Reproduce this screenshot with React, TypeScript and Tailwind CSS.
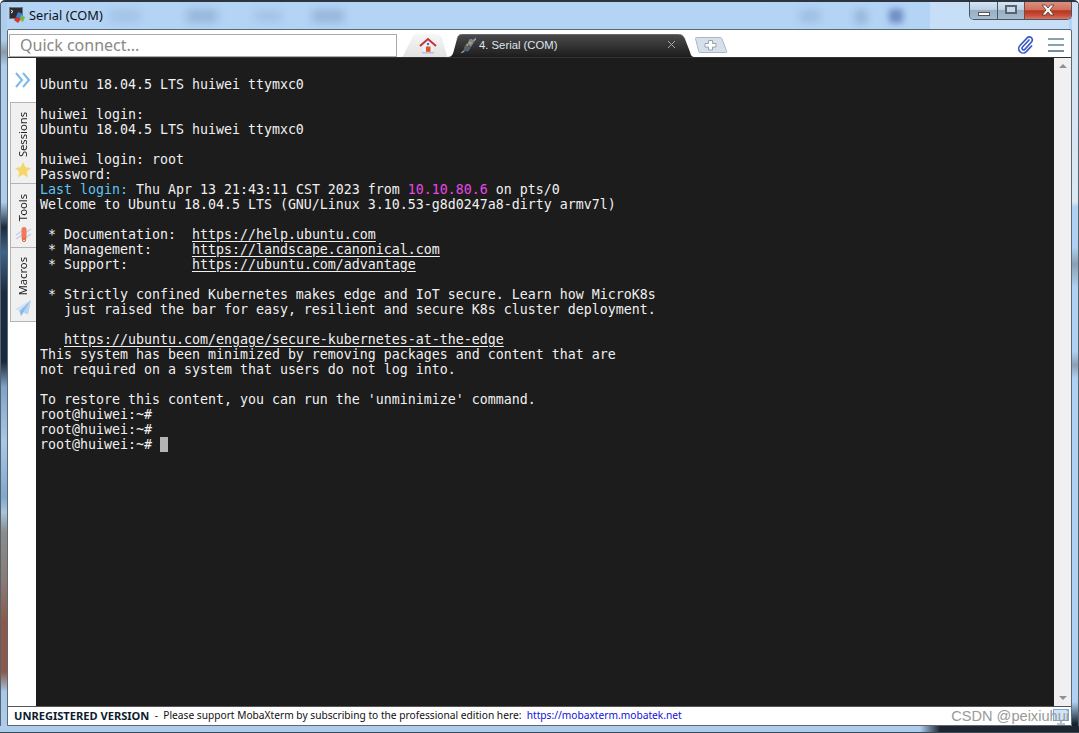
import { ReactNode } from 'react';

const mono = "font-['DejaVu_Sans_Mono','Liberation_Mono',monospace]";

function Link({ children }: { children: ReactNode }) {
  return <span className="underline underline-offset-2">{children}</span>;
}

function AppIcon() {
  return (
    <svg width="17" height="17" viewBox="0 0 17 17">
      <rect x="0.5" y="0.5" width="13" height="11" fill="#2c2c34" stroke="#777" />
      <path d="M2 3l2 1.5L2 6" stroke="#fff" fill="none" />
      <path d="M9 5l5 2-2 5-5-2z" fill="#3f7fd0" />
      <path d="M7 10l5 2-3 4-4-3z" fill="#d8332c" />
      <path d="M12 8l4 2-2 5-3-2z" fill="#7cb83a" />
    </svg>
  );
}

function HomeIcon() {
  return (
    <svg width="18" height="17" viewBox="0 0 18 17">
      <path d="M4 8l5-5 5 5v7H4z" fill="#eef0f6" />
      <path d="M1 9l8-7 8 7" fill="none" stroke="#c8323a" strokeWidth="2" />
      <circle cx="9" cy="7" r="1.2" fill="#3a78c0" />
      <rect x="7" y="9.5" width="4.5" height="6" fill="#e8501c" />
      <rect x="3" y="14.8" width="12" height="1.8" fill="#b9bde8" />
    </svg>
  );
}

function PlugIcon() {
  return (
    <svg width="17" height="17" viewBox="0 0 17 17">
      <path d="M9.500 2.500c2-1.500 5 .8 4 3.500L11 10 7 7z" fill="#7c8993" />
      <path d="M6 7l5 3.500-2.500 3.500c-2 1.500-5.500-1-4.500-3.500z" fill="#56636e" />
      <path d="M13 3l3-2.500v2L14 5zM4 13l-3.500 3h2L5 14z" fill="#8fa0ac" />
      <path d="M6.500 7.500l1.500 1M9.500 5.500L11 6.500" stroke="#f0c020" strokeWidth="1.500" />
    </svg>
  );
}

function ClipIcon() {
  return (
    <svg width="18" height="18" viewBox="0 0 18 18">
      <path
        d="M12.5 3.5L5.5 11a1.6 1.6 0 0 0 2.3 2.3L14.5 6a3 3 0 0 0-4.3-4.2L3 9.5a4.4 4.4 0 0 0 6.3 6.2L15 9.5"
        fill="none"
        stroke="#4058c8"
        strokeWidth="1.7"
      />
    </svg>
  );
}

function StarIcon() {
  return (
    <svg width="16" height="16" viewBox="0 0 16 16">
      <path d="M8 0l2.400 5.300 5.600.6-4.200 3.800 1.200 5.700L8 12.600l-5 2.800 1.200-5.700L0 5.900l5.600-.6z" fill="#f3d76a" />
    </svg>
  );
}

function ToolsIcon() {
  return (
    <svg width="17" height="16" viewBox="0 0 17 16">
      <path d="M1 13L16 3M1 9l9-6M7 14l9-6" stroke="#c9cde6" strokeWidth="1.5" />
      <rect x="6.5" y="1" width="5" height="13" rx="2.5" fill="#f0785c" />
      <circle cx="9" cy="14" r="1.6" fill="none" stroke="#d8603c" />
    </svg>
  );
}

function PlaneIcon() {
  return (
    <svg width="16" height="16" viewBox="0 0 16 16">
      <path d="M16 0L0 9l4.500 2z" fill="#cfe2f6" />
      <path d="M16 0L4.500 11 6 16l2.500-3.400z" fill="#8dbbe8" />
      <path d="M16 0L8.500 12.600l4.500 2z" fill="#b4d3f1" />
    </svg>
  );
}

function SideTab({ label, icon, height }: { label: string; icon: ReactNode; height: string }) {
  return (
    <div className={`flex flex-col items-center justify-end gap-[5px] pb-[5px] pr-[1px] border-b border-[#b4b4b4] ${height}`}>
      <span className="[writing-mode:vertical-rl] rotate-180 font-['Noto_Sans',sans-serif] text-[11.2px] leading-none text-[#222]">
        {label}
      </span>
      {icon}
    </div>
  );
}

export default function App() {
  return (
    <div className="relative w-[1079px] h-[733px] overflow-hidden flex flex-col bg-gradient-to-b from-[#b4d4f5] to-[#a9cdf0] border-t-2 border-[#2c3440] rounded-t-[5px]">
      {/* blurred desktop showing through the glass */}
      <div className="absolute left-0 top-0 w-[7px] h-[731px] border-l border-[#56646f] bg-[linear-gradient(to_bottom,#aecdec_0px,#aecdec_38px,#8a9aa8_50px,#aecdec_64px,#aecdec_200px,#1c2c40_225px,#3f648c_250px,#1c2c40_290px,#1a2a3e_360px,#7fa3c6_385px,#a8c8e8_440px,#7fa8cc_495px,#a8c4dc_510px,#8c8c8c_530px,#8a7a74_580px,#8c5a48_620px,#8c5a48_670px,#a8c8e8_690px,#aecdec_731px)]" />
      <div className="absolute right-0 top-0 w-[7px] h-[731px] border-r border-[#56646f] bg-[linear-gradient(to_bottom,#cfe2f4_0px,#dbe8f4_200px,#aed0f2_205px,#aed0f2_245px,#8aa0b4_262px,#aed0f2_285px,#aed0f2_350px,#8aa0b4_363px,#aed0f2_376px,#aed0f2_700px,#14202c_722px)]" />
      <div className="absolute left-0 bottom-0 w-[1079px] h-[7px] border-b border-[#3c4852] bg-[linear-gradient(to_right,#aecdec_0px,#aecdec_920px,#1d2630_940px,#1d2630_1079px)]" />
      <div className="absolute left-[110px] top-[8px] w-[30px] h-[12px] bg-[#8fb2d6] blur-[5px] opacity-50" />
      <div className="absolute left-[187px] top-[8px] w-[30px] h-[12px] bg-[#84a6ca] blur-[5px] opacity-70" />
      <div className="absolute left-[255px] top-[8px] w-[26px] h-[12px] bg-[#8fb2d6] blur-[5px] opacity-50" />
      <div className="absolute left-[312px] top-[8px] w-[32px] h-[12px] bg-[#84a6ca] blur-[5px] opacity-70" />
      <div className="absolute left-[800px] top-[8px] w-[20px] h-[12px] bg-[#8fb2d6] blur-[5px] opacity-70" />
      <div className="absolute left-[855px] top-[8px] w-[12px] h-[14px] bg-[#84a6ca] blur-[4px] opacity-70" />
      <div className="absolute left-[889px] top-[7px] w-[14px] h-[14px] bg-[#5c7cb8] blur-[3px] opacity-80" />
      <div className="absolute left-[930px] top-0 w-[139px] h-[27px] bg-[#d2e4f6] opacity-60" />

      {/* title bar */}
      <div className="relative h-[27px] shrink-0 flex items-start">
        <div className="mt-[5px] ml-[9px]">
          <AppIcon />
        </div>
        <span className="ml-[3px] mt-[4px] font-['Noto_Sans',sans-serif] text-[12.8px] leading-[18px] text-[#111]">Serial (COM)</span>
        <div className="ml-auto mr-[7px] flex h-[18px] border border-t-0 border-[#4a5664] rounded-b-[5px] overflow-hidden">
          <div className="w-[28px] flex items-center justify-center border-r border-[#4a5664] bg-[linear-gradient(to_bottom,#d4e4f3_0%,#bcd0e4_45%,#98aec4_50%,#a8bccf_100%)]">
            <div className="mt-[7px] w-[12px] h-[4px] bg-white border border-[#555]" />
          </div>
          <div className="w-[26px] flex items-center justify-center bg-[linear-gradient(to_bottom,#d4e4f3_0%,#bcd0e4_45%,#98aec4_50%,#a8bccf_100%)]">
            <div className="mb-[2px] w-[12px] h-[9px] border-2 border-[#59636e] bg-[#c8d8e8]" />
          </div>
          <div className="w-[47px] flex items-center justify-center border-l border-[#7a4a40] bg-[linear-gradient(to_bottom,#dc8f80_0%,#d0705c_45%,#b83420_52%,#c8503c_80%,#d87868_100%)]">
            <svg width="16" height="12" viewBox="0 0 16 12" className="mb-[1px]">
              <path d="M2 1h3.500L8 4l2.500-3H14l-4 5 4 5h-3.500L8 8l-2.500 3H2l4-5z" fill="#f4f4f4" stroke="#5a3a34" strokeWidth="0.8" />
            </svg>
          </div>
        </div>
      </div>

      {/* white frame */}
      <div className="relative flex-1 min-h-0 mx-[7px] mb-[7px] flex flex-col bg-white border border-[#5c6874] rounded-t-[2px]">
        {/* toolbar */}
        <div className="h-[27px] shrink-0 flex items-end pl-[1px]">
          <div className="w-[388px] h-[23px] border border-[#aaa] flex items-center pl-[10px] pb-[2px] font-['Noto_Sans',sans-serif] text-[16px] text-[#888]">
            Quick connect...
          </div>
          <div className="relative ml-[1px] w-[50px] h-[23px] flex items-center justify-center pl-[10px]">
            <svg width="50" height="23" viewBox="0 0 50 23" className="absolute left-0 top-0">
              <defs>
                <linearGradient id="homeTab" x1="0" y1="0" x2="0" y2="1">
                  <stop offset="0" stopColor="#f6f6f6" />
                  <stop offset="1" stopColor="#e2e2e2" />
                </linearGradient>
              </defs>
              <path d="M0 23c5 0 6-2 7-5l7-14c1-3 3-4 6-4h18c3 0 4 1 6 4l4 14c1 3 1 5 2 5z" fill="url(#homeTab)" />
            </svg>
            <div className="relative">
              <HomeIcon />
            </div>
          </div>
          <div className="relative w-[247px] h-[23px] flex items-center pl-[12px]">
            <svg width="247" height="23" viewBox="0 0 247 23" className="absolute left-0 top-0">
              <defs>
                <linearGradient id="darkTab" x1="0" y1="0" x2="0" y2="1">
                  <stop offset="0" stopColor="#4c4c4c" />
                  <stop offset="1" stopColor="#1c1c1c" />
                </linearGradient>
              </defs>
              <path d="M0 23c4 0 5-3 6-7l3-11c1-4 3-5 7-5h212c5 0 7 1 9 5l5 13c1 4 2 5 5 5z" fill="url(#darkTab)" />
              <path d="M9 5c1-4 3-5 7-5h212c5 0 7 1 9 5" fill="none" stroke="#7a8a98" strokeWidth="1" />
              <path d="M220 7l7 7M227 7l-7 7" stroke="#a8a8a8" strokeWidth="1" />
            </svg>
            <div className="relative flex items-center">
              <PlugIcon />
              <span className="ml-[2px] font-['Liberation_Sans',sans-serif] text-[11.3px] text-[#dfe6ee]">4. Serial (COM)</span>
            </div>
          </div>
          <svg width="34" height="16" viewBox="0 0 34 16" className="-ml-[1px] mb-[4px]">
            <path d="M1.500 1.500c0-.6.4-1 1-1h24c.6 0 1 .2 1.300 1l5 13c.2.600 0 1-.8 1H6c-.6 0-1-.2-1.200-.8z" fill="#d6e0ea" stroke="#a8b8c8" />
            <path d="M14.500 3.500h4v3h3.500v3.500h-3.500v3h-4v-3H11V6.500h3.500z" fill="#fff" stroke="#9aa4ae" />
          </svg>
          <div className="ml-auto mb-[3px] mr-[7px] flex items-center gap-[13px]">
            <ClipIcon />
            <div className="w-[16px] h-[14px] flex flex-col justify-between">
              <div className="h-[2px] bg-[#86a2ae]" />
              <div className="h-[2px] bg-[#86a2ae]" />
              <div className="h-[2px] bg-[#6f8f9c]" />
            </div>
          </div>
        </div>

        {/* main row */}
        <div className="flex-1 min-h-0 flex border-t border-[#333]">
          {/* sidebar */}
          <div className="w-[28px] shrink-0 flex flex-col pl-[2px]">
            <div className="h-[44px] flex items-center justify-center">
              <svg width="16" height="16" viewBox="0 0 16 16">
                <path d="M1 1l6 7-6 7M8 1l6 7-6 7" fill="none" stroke="#7db8ec" strokeWidth="2" />
              </svg>
            </div>
            <div className="bg-[#f0f0f0] border-l border-t border-[#b4b4b4]">
              <SideTab label="Sessions" height="h-[81px]" icon={<StarIcon />} />
              <SideTab label="Tools" height="h-[64px]" icon={<ToolsIcon />} />
              <SideTab label="Macros" height="h-[74px]" icon={<PlaneIcon />} />
            </div>
          </div>

          {/* terminal */}
          <div className={`flex-1 min-w-0 bg-[#1c1c1c] pt-[4px] pl-[4px] text-[13.29px] leading-[15px] whitespace-pre text-[#f0f0f0] ${mono}`}>
            <div>{' '}</div>
            <div>Ubuntu 18.04.5 LTS huiwei ttymxc0</div>
            <div>{' '}</div>
            <div>huiwei login:</div>
            <div>Ubuntu 18.04.5 LTS huiwei ttymxc0</div>
            <div>{' '}</div>
            <div>huiwei login: root</div>
            <div>Password:</div>
            <div>
              <span className="text-[#5fc4f0]">Last login:</span> Thu Apr 13 21:43:11 CST 2023 from{' '}
              <span className="text-[#e848e8]">10.10.80.6</span> on pts/0
            </div>
            <div>Welcome to Ubuntu 18.04.5 LTS (GNU/Linux 3.10.53-g8d0247a8-dirty armv7l)</div>
            <div>{' '}</div>
            <div> * Documentation:  <Link>https://help.ubuntu.com</Link></div>
            <div> * Management:     <Link>https://landscape.canonical.com</Link></div>
            <div> * Support:        <Link>https://ubuntu.com/advantage</Link></div>
            <div>{' '}</div>
            <div> * Strictly confined Kubernetes makes edge and IoT secure. Learn how MicroK8s</div>
            <div>   just raised the bar for easy, resilient and secure K8s cluster deployment.</div>
            <div>{' '}</div>
            <div>   <Link>https://ubuntu.com/engage/secure-kubernetes-at-the-edge</Link></div>
            <div>This system has been minimized by removing packages and content that are</div>
            <div>not required on a system that users do not log into.</div>
            <div>{' '}</div>
            <div>To restore this content, you can run the 'unminimize' command.</div>
            <div>root@huiwei:~#</div>
            <div>root@huiwei:~#</div>
            <div>
              root@huiwei:~# <span className="inline-block w-[8px] h-[15px] align-top bg-[#b4b4b4]" />
            </div>
          </div>

          {/* scrollbar */}
          <div className="w-[17px] shrink-0 bg-[#f0f0f0] flex flex-col justify-between items-center py-[6px]">
            <div className="w-0 h-0 border-x-[4px] border-x-transparent border-b-[4px] border-b-[#909090]" />
            <div className="w-0 h-0 border-x-[4px] border-x-transparent border-t-[4px] border-t-[#909090]" />
          </div>
        </div>

        {/* status bar */}
        <div className="relative h-[19px] shrink-0 border-t border-[#555] flex items-center pl-[6px] font-['Noto_Sans',sans-serif] text-[10.2px] text-[#111] whitespace-pre">
          <span className="font-bold text-[11.1px] text-[#0c1c30]">UNREGISTERED VERSION</span>
          <span>{'  -  Please support MobaXterm by subscribing to the professional edition here:  '}</span>
          <span className="text-[#1010e0]">https://mobaxterm.mobatek.net</span>
          <svg width="16" height="16" viewBox="0 0 16 16" className="absolute right-[2px] top-[2px]">
            <rect x="0.5" y="0.5" width="15" height="11" fill="#cfe4f8" stroke="#7aa8d4" />
            <path d="M8 12v2M4 15h8" stroke="#7a8a96" strokeWidth="1.200" />
          </svg>
          <span className="absolute right-[2px] top-0 font-['Liberation_Sans',sans-serif] text-[14.6px] leading-[19px] text-[#999]">CSDN @peixiuhui</span>
        </div>
      </div>
    </div>
  );
}
